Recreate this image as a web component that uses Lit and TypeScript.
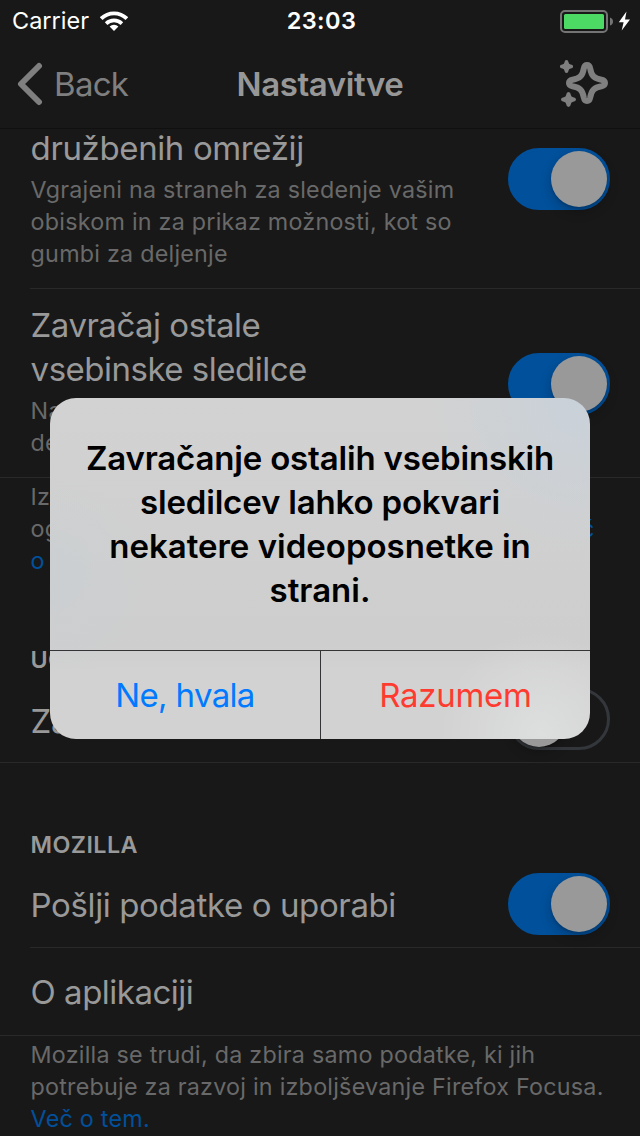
import { LitElement, html, css, svg } from "lit";
import { customElement, property } from "lit/decorators.js";

@customElement("ios-switch")
class IosSwitch extends LitElement {
  @property({ type: Boolean, reflect: true }) on = false;

  static styles = css`
    :host { display: block; flex: none; }
    .track {
      box-sizing: border-box; width: 102px; height: 62px; border-radius: 31px;
      border: 3px solid #33373b; display: flex; justify-content: flex-start;
    }
    .knob {
      width: 56px; height: 56px; border-radius: 50%; background: #999;
      box-shadow: 0 5px 12px rgba(0, 0, 0, 0.22), 0 2px 2px rgba(0, 0, 0, 0.12);
    }
    :host([on]) .track { background: #00509b; border-color: #00509b; justify-content: flex-end; }
  `;

  render() {
    return html`<div class="track"><div class="knob"></div></div>`;
  }
}

const wifi = svg`
  <path d="M1.2 7.6 A18.2 18.2 0 0 1 26.8 7.6" fill="none" stroke="#fff" stroke-width="3.8"/>
  <path d="M6.1 12.6 A11.3 11.3 0 0 1 21.9 12.6" fill="none" stroke="#fff" stroke-width="3.6"/>
  <path d="M14 20 L9.6 15.6 A6.3 6.3 0 0 1 18.4 15.6 Z" fill="#fff"/>`;

const smallStar = "M0 -6.6 Q1.8 -6.6 2 -4.2 Q2.2 -2.2 4.2 -2 Q6.6 -1.8 6.6 0 Q6.6 1.8 4.2 2 Q2.2 2.2 2 4.2 Q1.8 6.6 0 6.6 Q-1.8 6.6 -2 4.2 Q-2.2 2.2 -4.2 2 Q-6.6 1.8 -6.6 0 Q-6.6 -1.8 -4.2 -2 Q-2.2 -2.2 -2 -4.2 Q-1.8 -6.6 0 -6.6Z";

@customElement("app-root")
class AppRoot extends LitElement {
  static styles = css`
    :host {
      display: block; position: relative; width: 640px; height: 1136px; overflow: hidden;
      background: #181818; color: #999; font-family: Inter, "Liberation Sans", sans-serif;
      font-size: 33px; line-height: 44px;
    }
    svg { display: block; }
    .line { display: block; white-space: pre; }
    .status {
      height: 40px; display: grid; grid-template-columns: 1fr auto 1fr; align-items: center;
      color: #fff; font-size: 23.5px; line-height: 40px; padding: 0 9px 0 12px;
    }
    .carrier { display: flex; align-items: center; gap: 11px; }
    .carrier-name, .clock { padding-top: 1px; }
    .clock { font-weight: 600; letter-spacing: 0.4px; }
    .power { display: flex; justify-content: flex-end; }
    .nav {
      height: 88px; padding: 0 17px;
      display: grid; grid-template-columns: 1fr auto 1fr; align-items: center;
    }
    .back { display: flex; align-items: center; gap: 11px; color: #7f7f7f; letter-spacing: -0.7px; }
    .title { font-weight: 600; color: #979797; letter-spacing: -0.4px; }
    .tips { display: flex; justify-content: flex-end; padding-right: 14px; }
    .list { border-top: 1px solid #101010; height: 1007px; overflow: hidden; }
    .row {
      display: flex; justify-content: space-between; box-sizing: border-box;
      margin-left: 30px; padding-right: 30px; border-bottom: 1px solid #29292a;
    }
    .row.last { margin-left: 0; padding-left: 30px; }
    .text { letter-spacing: -0.38px; padding-left: 0.6px; }
    .tight { letter-spacing: -0.5px; }
    .social { height: 160px; }
    .social .text { margin-top: -3px; }
    .social ios-switch { margin-top: 19px; }
    .content { height: 189px; }
    .content .text { margin-top: 14px; }
    .content ios-switch { margin-top: 64px; }
    .small { font-size: 23.3px; line-height: 32px; color: #696969; letter-spacing: 0.24px; }
    .text .small { margin-top: 4px; }
    .link { color: #00509b; }
    .foot { padding: 3px 0 0 30.5px; height: 163px; }
    .split { display: flex; justify-content: space-between; margin-right: 45.5px; }
    .section { font-size: 23.3px; line-height: 32px; font-weight: 600; padding-left: 30.5px; height: 32px; letter-spacing: 0.45px; }
    .security { height: 87px; }
    .security .text { margin-top: 23px; }
    .security ios-switch { margin-top: 12px; }
    .mozilla { margin-top: 66px; }
    .usage { height: 87px; }
    .usage .text { margin-top: 22px; }
    .usage ios-switch { margin-top: 12px; }
    .about { height: 88px; }
    .about .text { margin-top: 22px; }
    .alert {
      position: absolute; left: 50px; top: 398px; width: 540px; height: 341px;
      border-radius: 26px; overflow: hidden; display: flex; flex-direction: column;
      background:
        radial-gradient(circle at 530px 5px, #c9d1d9 0, rgba(201, 209, 217, 0) 150px),
        radial-gradient(circle at 490px 335px, #dddede 0, rgba(221, 222, 222, 0) 100px),
        radial-gradient(circle at 0 180px, #cbcfd2 0, rgba(203, 207, 210, 0) 100px),
        linear-gradient(#d2d2d2, #cecece 72%, #d2d2d2 80%);
    }
    .message {
      height: 214px; padding-top: 38px; text-align: center; color: #000; font-weight: 600;
      border-bottom: 1px solid #343436;
    }
    .snug { letter-spacing: -0.17px; }
    .actions { display: grid; grid-template-columns: 270px 1fr; height: 88px; text-align: center; line-height: 88px; }
    .cancel { color: #007aff; letter-spacing: -0.65px; }
    .confirm { color: #ff3b30; border-left: 1px solid #343436; letter-spacing: -0.3px; }
  `;

  render() {
    return html`
      <div class="status">
        <div class="carrier">
          <span class="carrier-name">Carrier</span>
          <svg width="28" height="20" viewBox="0 0 28 20">${wifi}</svg>
        </div>
        <span class="clock">23:03</span>
        <div class="power">
          <svg width="71" height="24" viewBox="0 0 71 24">
            <rect x="1" y="2" width="46" height="21" rx="4" fill="none" stroke="#747474" stroke-width="2"/>
            <rect x="4" y="5" width="40" height="15" rx="1.5" fill="#4cd964"/>
            <path d="M50 8.5 Q53 9.5 53 12.5 Q53 15.5 50 16.5Z" fill="#747474"/>
            <path d="M66.5 2.5 L58.8 13.3 L63.6 13.3 L61.7 21.6 L70 10.6 L65 10.6Z" fill="#fff"/>
          </svg>
        </div>
      </div>
      <div class="nav">
        <div class="back">
          <svg width="26" height="44" viewBox="0 0 26 44">
            <path d="M22 4 L4 22 L22 40" fill="none" stroke="#7f7f7f" stroke-width="6" stroke-linecap="round" stroke-linejoin="round"/>
          </svg>
          <span>Back</span>
        </div>
        <span class="title">Nastavitve</span>
        <div class="tips">
          <svg width="50" height="50" viewBox="559 58 50 50">
            <path d="M583.8 67.5 Q584.5 64 587 64 Q589.5 64 590.2 67.5 C591.4 74.8 594.2 77.6 601.5 78.8 Q605 79.5 605 82 Q605 84.5 601.5 85.2 C594.2 86.4 591.4 89.2 590.2 96.5 Q589.5 100 587 100 Q584.5 100 583.8 96.5 C582.6 89.2 579.8 86.4 572.5 85.2 Q569 84.5 569 82 Q569 79.5 572.5 78.8 C579.8 77.6 582.6 74.8 583.8 67.5Z"
              fill="none" stroke="#7f7f7f" stroke-width="6"/>
            <path d=${smallStar} transform="translate(566.5 65.5)" fill="#7f7f7f"/>
            <path d=${smallStar} transform="translate(568.5 98.5) scale(1.14)" fill="#7f7f7f"/>
          </svg>
        </div>
      </div>
      <div class="list">
        <div class="row social">
          <div class="text">
            <span class="line">družbenih omrežij</span>
            <div class="small">
              <span class="line">Vgrajeni na straneh za sledenje vašim</span>
              <span class="line">obiskom in za prikaz možnosti, kot so</span>
              <span class="line">gumbi za deljenje</span>
            </div>
          </div>
          <ios-switch on></ios-switch>
        </div>
        <div class="row last content">
          <div class="text">
            <span class="line tight">Zavračaj ostale</span>
            <span class="line tight">vsebinske sledilce</span>
            <div class="small">
              <span class="line">Na</span>
              <span class="line">de</span>
            </div>
          </div>
          <ios-switch on></ios-switch>
        </div>
        <div class="foot small">
          <span class="line">Iz</span>
          <div class="split"><span>og</span><span class="link">Več</span></div>
          <span class="line link">o</span>
        </div>
        <div class="section">UG</div>
        <div class="row last security">
          <div class="text"><span class="line">Za</span></div>
          <ios-switch></ios-switch>
        </div>
        <div class="section mozilla">MOZILLA</div>
        <div class="row usage">
          <div class="text"><span class="line">Pošlji podatke o uporabi</span></div>
          <ios-switch on></ios-switch>
        </div>
        <div class="row last about">
          <div class="text"><span class="line tight">O aplikaciji</span></div>
        </div>
        <div class="foot small">
          <span class="line">Mozilla se trudi, da zbira samo podatke, ki jih</span>
          <span class="line">potrebuje za razvoj in izboljševanje Firefox Focusa.</span>
          <span class="line link">Več o tem.</span>
        </div>
      </div>
      <div class="alert">
        <div class="message">
          <span class="line snug">Zavračanje ostalih vsebinskih</span>
          <span class="line snug">sledilcev lahko pokvari</span>
          <span class="line">nekatere videoposnetke in</span>
          <span class="line">strani.</span>
        </div>
        <div class="actions">
          <span class="cancel">Ne, hvala</span>
          <span class="confirm">Razumem</span>
        </div>
      </div>
    `;
  }
}
